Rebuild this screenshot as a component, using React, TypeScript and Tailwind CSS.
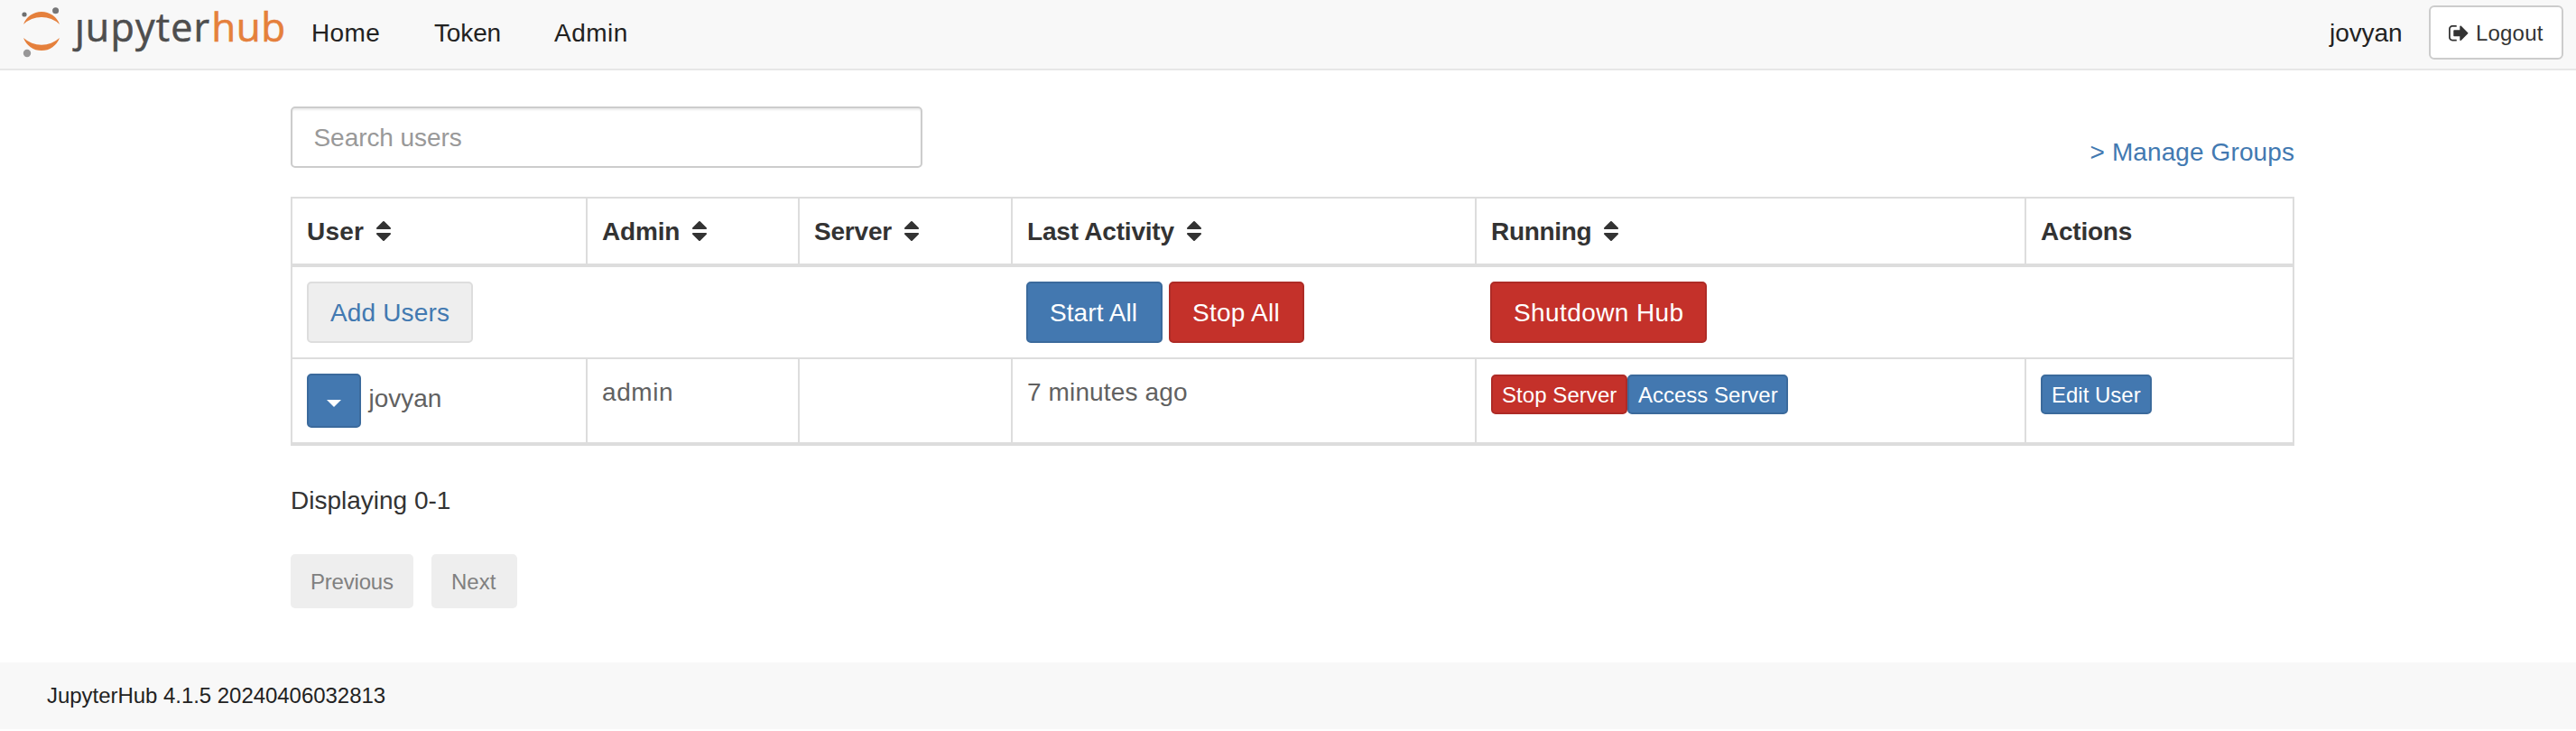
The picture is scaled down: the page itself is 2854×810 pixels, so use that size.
import type { ReactNode } from "react";

const SortIcon = ({ className = "ml-[14px]" }: { className?: string }) => (
  <svg viewBox="384 192 1024 1408" className={`mt-[9px] h-[22px] w-4 shrink-0 fill-[#333] ${className}`}>
    <path d="M1408 1088q0 26-19 45l-448 448q-19 19-45 19t-45-19l-448-448q-19-19-19-45t19-45 45-19h896q26 0 45 19t19 45zm0-384q0 26-19 45t-45 19h-896q-26 0-45-19t-19-45 19-45l448-448q19-19 45-19t45 19l448 448q19 19 19 45z" />
  </svg>
);

const SignOutIcon = () => (
  <svg viewBox="0 256 1568 1280" className="mt-[10px] h-[17.5px] w-[21.5px] shrink-0 fill-[#333]">
    <path d="M640 1440q0 4 1 20t.5 26.5-3 23.5-10 19.5-20.5 6.5h-320q-119 0-203.5-84.5t-84.5-203.5v-704q0-119 84.5-203.5t203.5-84.5h320q13 0 22.5 9.5t9.5 22.5q0 4 1 20t.5 26.5-3 23.5-10 19.5-20.5 6.5h-320q-66 0-113 47t-47 113v704q0 66 47 113t113 47h312l11.5 1 11.5 3 8 5.5 7 9 2 13.5zm928-544q0 26-19 45l-544 544q-19 19-45 19t-45-19-19-45v-288h-448q-26 0-45-19t-19-45v-384q0-26 19-45t45-19h448v-288q0-26 19-45t45-19 45 19l544 544q19 19 19 45z" />
  </svg>
);

const Logo = () => (
  <a className="flex w-[345px] shrink-0 pl-5">
    <svg viewBox="20 0 50 70" className="h-[70px] w-[50px] shrink-0">
      <path d="M26 27A21.3 21.3 0 0 1 66 27A29 29 0 0 0 26 27Z" fill="#e5803c" />
      <path d="M26 42A21.3 21.3 0 0 0 66 42A30 30 0 0 1 26 42Z" fill="#e5803c" />
      <circle cx="27" cy="16" r="2.6" fill="#6f7070" />
      <circle cx="61.6" cy="11.7" r="3.5" fill="#767677" />
      <circle cx="30" cy="59" r="4.2" fill="#989798" />
    </svg>
    <span className="ml-[13px] flex items-baseline font-['Open_Sans',sans-serif] text-[43px] leading-[58px] whitespace-nowrap text-[#4e4e4e] [-webkit-text-stroke:0.6px_#4e4e4e]">
      <span className="mr-px [clip-path:inset(21px_-10px_-12px_-10px)]">j</span>
      <span className="tracking-[1.2px]">upyter</span>
      <span className="ml-px text-[44px] tracking-[0.45px] text-[#e5803c] [-webkit-text-stroke:0.6px_#e5803c]">hub</span>
    </span>
  </a>
);

const HeadCell = ({ children }: { children: ReactNode }) => (
  <div className="flex border-r-2 border-[#ddd] pt-4 pl-4 font-bold last:border-r-0">{children}</div>
);

const Cell = ({ children, className = "pt-4" }: { children?: ReactNode; className?: string }) => (
  <div className={`flex items-start border-r-2 border-[#ddd] pl-4 last:border-r-0 ${className}`}>{children}</div>
);

const columns = "grid grid-cols-[327px_235px_236px_514px_609px_295px]";
const blue = "border-[#3b6a9c] bg-[#4378b0] text-white";
const red = "border-[#ae2b26] bg-[#c4312a] text-white";
const large = "flex items-start h-[68px] rounded-[5px] border-2 pt-3 pl-6";
const small = "flex items-start h-[44px] rounded-[5px] border-2 pt-[2px] pl-[10px] text-[24px] leading-[37px]";
const pager = "flex items-start h-[60px] rounded-[5px] bg-[#eee] pt-3 pl-[22px] text-[24px] leading-[37px] text-[#808080]";

export default function App() {
  return (
    <div className="flex h-[810px] w-[2854px] flex-col overflow-hidden whitespace-nowrap bg-white font-['Liberation_Sans',Arial,sans-serif] text-[28px] leading-[41px] text-[#333]">
      <nav className="flex h-[78px] shrink-0 items-start border-b-2 border-[#e7e7e7] bg-[#f8f8f8] text-[#222]">
        <Logo />
        <a className="mt-4 w-[136px] tracking-[0.39px]">Home</a>
        <a className="mt-4 w-[133px] tracking-[-0.14px]">Token</a>
        <a className="mt-4 tracking-[0.48px]">Admin</a>
        <a className="mt-4 ml-auto w-[110px] tracking-[-0.07px]">jovyan</a>
        <button className="mt-[6px] mr-[14px] flex h-[60px] w-[149px] items-start rounded-[6px] border-2 border-[#ccc] bg-white pt-[10px] pl-[20px] text-[24px] leading-[37px] text-[#333]">
          <SignOutIcon />
          <span className="ml-[8.5px] tracking-[0.19px]">Logout</span>
        </button>
      </nav>

      <main className="ml-[322px] w-[2220px] pt-10">
        <div className="flex h-[68px] items-start justify-between">
          <input
            placeholder="Search users"
            className="h-[68px] w-[700px] rounded-[5px] border-2 border-[#ccc] bg-white pt-px pr-6 pl-[23.5px] leading-[41px] tracking-[-0.06px] shadow-[inset_0_2px_2px_rgba(0,0,0,0.075)] placeholder:text-[#999]"
          />
          <a className="mt-[30px] tracking-[0.1px] text-[#4279b1]">&gt; Manage Groups</a>
        </div>

        <div className="mt-8 border-2 border-b-4 border-[#ddd]">
          <div className={`${columns} h-[76px] border-b-4 border-[#ddd]`}>
            <HeadCell><span className="tracking-[0.24px]">User</span><SortIcon /></HeadCell>
            <HeadCell><span className="tracking-[-0.18px]">Admin</span><SortIcon /></HeadCell>
            <HeadCell><span className="tracking-[-0.2px]">Server</span><SortIcon /></HeadCell>
            <HeadCell><span className="tracking-[-0.2px]">Last Activity</span><SortIcon className="ml-[14.5px]" /></HeadCell>
            <HeadCell><span className="tracking-[-0.32px]">Running</span><SortIcon /></HeadCell>
            <HeadCell><span className="tracking-[-0.23px]">Actions</span></HeadCell>
          </div>

          <div className={`${columns} h-[102px] border-b-2 border-[#ddd] pt-4`}>
            <div className="col-span-3 pl-4">
              <button className={`${large} w-[184px] border-[#ddd] bg-[#eee] tracking-[0.15px] text-[#4279b1]`}>Add Users</button>
            </div>
            <div className="flex gap-[7px] pl-[15px]">
              <button className={`${large} ${blue} w-[151px] tracking-[0.07px]`}>Start All</button>
              <button className={`${large} ${red} w-[150px] tracking-[0.25px]`}>Stop All</button>
            </div>
            <div className="col-span-2 pl-[15px]">
              <button className={`${large} ${red} w-[240px] tracking-[0.4px]`}>Shutdown Hub</button>
            </div>
          </div>

          <div className={`${columns} h-[92px] text-[#616161]`}>
            <Cell>
              <button className={`${blue} flex h-[60px] w-[60px] items-start justify-center rounded-[5px] border-2 pt-[27px]`}>
                <svg viewBox="0 0 16 8" className="h-2 w-4 fill-white"><path d="M0 0H16L8 8Z" /></svg>
              </button>
              <span className="mt-[7px] ml-[8.5px]">jovyan</span>
            </Cell>
            <Cell><span className="tracking-[0.6px]">admin</span></Cell>
            <Cell />
            <Cell><span className="tracking-[0.13px]">7 minutes ago</span></Cell>
            <Cell className="pt-[17px]">
              <button className={`${small} ${red} w-[151px] tracking-[0.06px]`}>Stop Server</button>
              <button className={`${small} ${blue} w-[178px]`}>Access Server</button>
            </Cell>
            <Cell className="pt-[17px]">
              <button className={`${small} ${blue} w-[123px]`}>Edit User</button>
            </Cell>
          </div>
        </div>

        <p className="mt-10">Displaying 0-1</p>
        <div className="mt-[39px] flex gap-5">
          <button className={`${pager} w-[136px] tracking-[-0.2px]`}>Previous</button>
          <button className={`${pager} w-[95px]`}>Next</button>
        </div>
      </main>

      <footer className="mt-[60px] h-[74px] shrink-0 bg-[#f8f8f8] pt-[18px] pl-[52px] text-[24px] leading-[37px] tracking-[-0.04px] text-[#222]">
        JupyterHub 4.1.5 20240406032813
      </footer>
    </div>
  );
}
